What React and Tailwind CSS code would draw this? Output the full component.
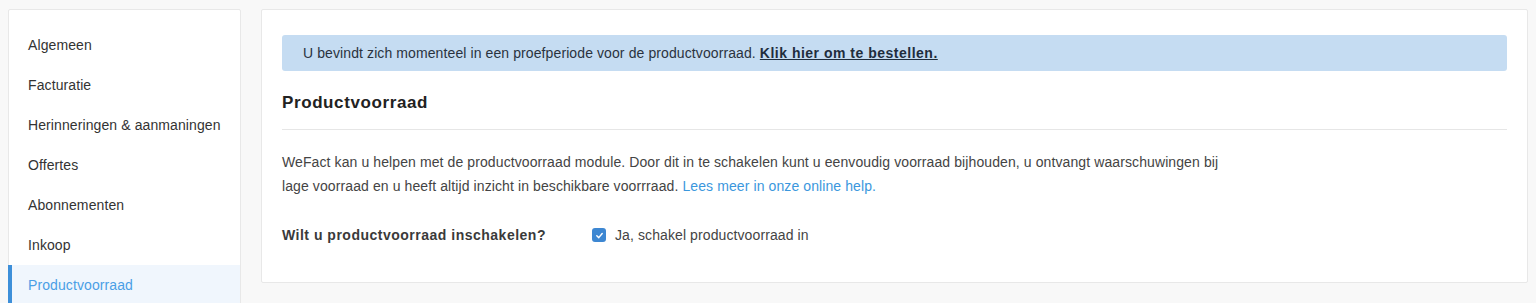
import React from "react";

const items = [
  "Algemeen",
  "Facturatie",
  "Herinneringen & aanmaningen",
  "Offertes",
  "Abonnementen",
  "Inkoop",
];

export default function App() {
  return (
    <div
      className="h-[303px] overflow-hidden bg-[#f8f8f8] flex items-start gap-[20px] pl-[8px] pr-[8px] pt-[9px] text-[#333333] tracking-[0.1px]"
      style={{ fontFamily: '"Liberation Sans", Arial, sans-serif' }}
    >
      <aside className="w-[233px] shrink-0 h-[310px] bg-white border border-[#e8e8e8] rounded-[2px] pt-[15px]">
        {items.map((t) => (
          <div key={t} className="h-[40px] flex items-center pl-[19px] text-[14px] text-[#333333]">
            {t}
          </div>
        ))}
        <div className="h-[40px] flex items-center -ml-px border-l-4 border-[#3d8fd9] bg-[#f0f6fd] pl-[16px] text-[14px] text-[#4a9fe6]">
          Productvoorraad
        </div>
      </aside>

      <main className="flex-1 bg-white border border-[#e8e8e8] rounded-[2px] px-[20px] pt-[25px] pb-[35px]">
        <div className="h-[36px] flex items-center rounded-[3px] bg-[#c5dcf2] px-[21px] text-[14px] text-[#2a3340]">
          <span>
            U bevindt zich momenteel in een proefperiode voor de productvoorraad.{" "}
            <a href="#" className="font-bold underline tracking-[0.5px] text-[#1f2d3d]">
              Klik hier om te bestellen.
            </a>
          </span>
        </div>

        <h2 className="mt-[20px] pb-[14px] border-b border-[#e6e6e6] text-[17px] leading-[24px] font-bold tracking-[0.6px] text-[#222222]">
          Productvoorraad
        </h2>

        <p className="mt-[20px] w-[945px] text-[14px] leading-[24px] text-[#444444]">
          WeFact kan u helpen met de productvoorraad module. Door dit in te schakelen kunt u eenvoudig voorraad bijhouden, u ontvangt waarschuwingen bij lage voorraad en u heeft altijd inzicht in beschikbare voorrraad.{" "}
          <a href="#" className="text-[#3b97dd]">
            Lees meer in onze online help.
          </a>
        </p>

        <div className="mt-[25px] flex items-center h-[24px] text-[14px]">
          <div className="w-[310px] shrink-0 font-bold tracking-[0.5px] text-[#3a3a3a]">Wilt u productvoorraad inschakelen?</div>
          <label className="flex items-center gap-[9px] text-[#444444]">
            <span className="w-[14px] h-[14px] rounded-[3px] bg-[#3d87d2] flex items-center justify-center">
              <svg width="9" height="9" viewBox="0 0 10 10" fill="none">
                <path d="M2 5.2 L4.2 7.4 L8 2.8" stroke="white" strokeWidth="1.6" strokeLinecap="round" strokeLinejoin="round" />
              </svg>
            </span>
            Ja, schakel productvoorraad in
          </label>
        </div>
      </main>
    </div>
  );
}
